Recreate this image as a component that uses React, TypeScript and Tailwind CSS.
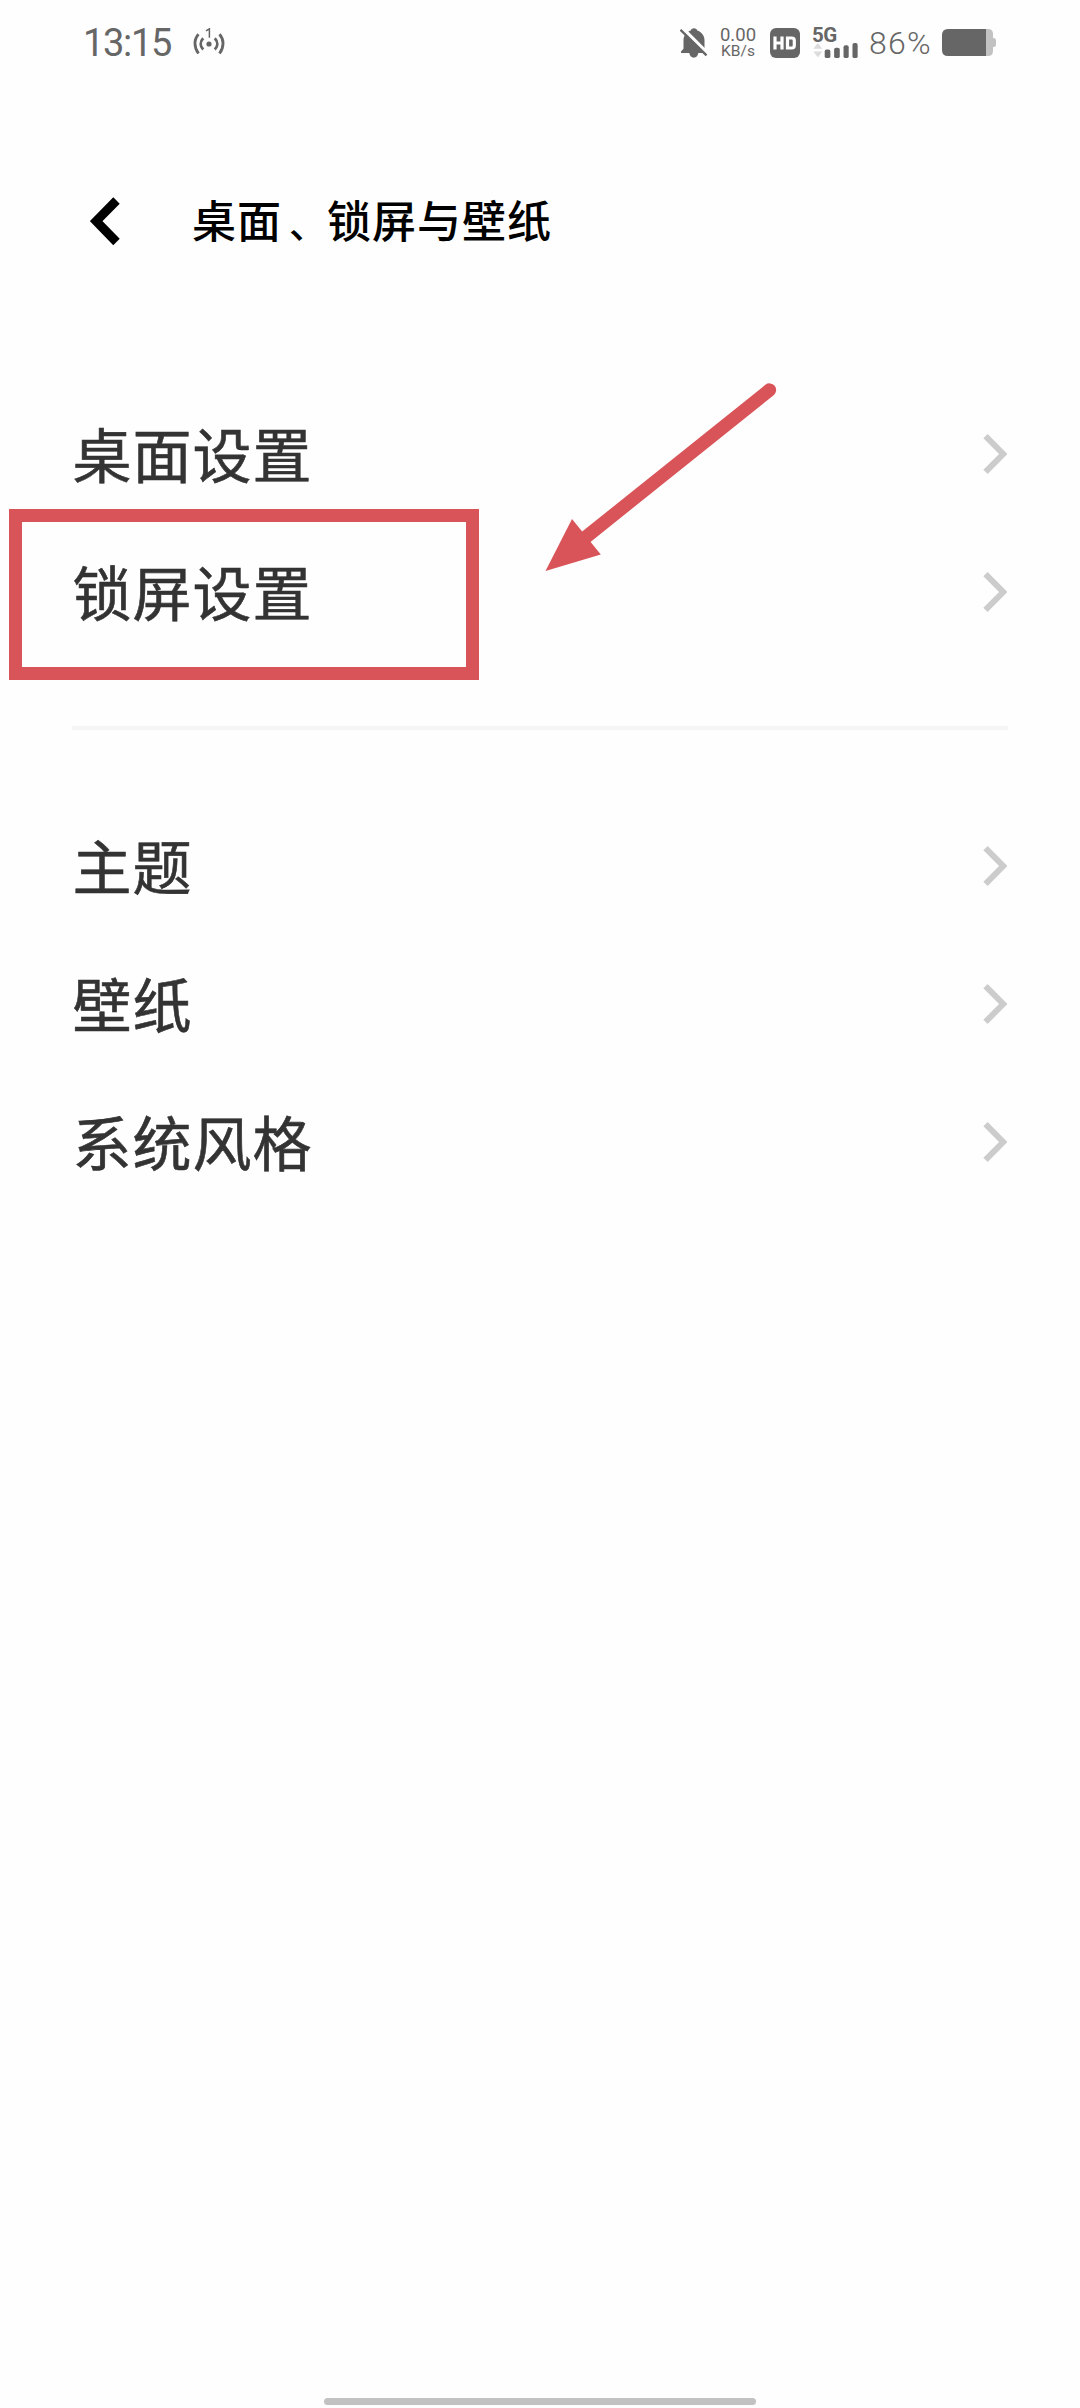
import React from "react";

function Antenna() {
  return (
    <svg className="h-[30px] w-[32px]" viewBox="0 0 32 30" fill="none" stroke="#666" strokeWidth="2.8">
      <path d="M5.5 6.3C.8 11.5.8 19 5.5 25.5M26.5 6.3c4.7 5.2 4.7 12.700 0 19.200" />
      <path d="M10.200 10.200c-3.300 3.500-3.300 8 0 11.400M21.800 10.200c3.300 3.500 3.300 8 0 11.400" />
      <circle cx="16" cy="16" r="2.6" fill="#666" stroke="none" />
      <path d="M13 2.800l3.400-2V9.800" strokeWidth="1.500" />
    </svg>
  );
}

function BellOff() {
  return (
    <svg className="h-[30px] w-[28px]" viewBox="0 0 28 30">
      <path
        d="M14 .2c1.700 0 3 1 3.200 2.200 4.300 1.300 7.300 5.200 7.300 9.800v8.500l2 4.300h-8.200c-.5 2.800-2.200 4.700-4.500 4.700s-4-1.900-4.500-4.700H1v-1.500l2.500-2.800v-8.500c0-4.600 3-8.500 7.300-9.800C11 1.200 12.300.2 14 .2z"
        fill="#666"
      />
      <path d="M2 -.3L29 26.700" stroke="#fefefe" strokeWidth="3.600" />
      <path d="M.5 1.800L26.500 27.300" stroke="#666" strokeWidth="2.400" />
    </svg>
  );
}

function HdBadge() {
  return (
    <svg className="h-[30px] w-[30px]" viewBox="0 0 30 30">
      <rect width="30" height="30" rx="6" fill="#666" />
      <path d="M5 8.500v13M12 8.500v13M5 15h7M17.500 10h4.300q2.500 0 2.500 2.500v5q0 2.500-2.500 2.500h-4.300z" fill="none" stroke="#fefefe" strokeWidth="3.200" />
    </svg>
  );
}

function Signal() {
  return (
    <svg className="h-[17px] w-[48px]" viewBox="0 0 48 17">
      <path d="M4.700 0L9.500 6H0zM0 9h9.500L4.700 15.500z" fill="#dcdcdc" />
      <g fill="#666">
        <rect x="12" y="7" width="6" height="9" rx="2" />
        <rect x="22" y="5" width="6" height="11" rx="2" />
        <rect x="32" y="2.500" width="5.500" height="13.500" rx="2" />
        <rect x="41.500" y="0" width="5.500" height="16" rx="2" />
      </g>
    </svg>
  );
}

function Battery() {
  return (
    <svg className="h-[27px] w-[54px]" viewBox="0 0 54 27">
      <path d="M44 0h2q5 0 5 5v4h.5q2.500 0 2.500 2.500v4q0 2.500-2.500 2.500H51v4q0 5-5 5h-2z" fill="#c2c2c2" />
      <path d="M6 0h38v27H6q-6 0-6-6V6q0-6 6-6z" fill="#666" />
    </svg>
  );
}

function StatusBar() {
  return (
    <header className="flex h-[85px] items-center pr-[84px] pl-[83px] font-[Roboto,sans-serif] text-[#666]">
      <span className="w-[110px] pt-px text-[38px] leading-[84px] tracking-[-1.3px] whitespace-nowrap">13:15</span>
      <Antenna />
      <div className="ml-auto flex items-center">
        <BellOff />
        <div className="ml-[11px] flex w-[38px] flex-col items-center whitespace-nowrap">
          <span className="text-[18.5px] leading-[17px]">0.00</span>
          <span className="text-[15.500px] leading-[15px]">KB/s</span>
        </div>
        <div className="ml-[13px]">
          <HdBadge />
        </div>
        <div className="ml-[12px] flex h-[32px] w-[48px] flex-col">
          <span className="text-[20.500px] leading-[16px] font-bold tracking-[-0.5px]">5G</span>
          <Signal />
        </div>
        <span className="ml-[9px] w-[73px] pt-px text-[32px] leading-[84px] font-light tracking-[1.3px] whitespace-nowrap">86%</span>
        <Battery />
      </div>
    </header>
  );
}

function Row({ label, highlighted = false }: { label: string; highlighted?: boolean }) {
  return (
    <li className="relative flex h-[138px] items-center justify-between">
      <span className="pb-[3px] pl-[0.5px] text-[59px] leading-[60px] tracking-[1px] text-[#333] [-webkit-text-stroke:0.6px_#333]">
        {label}
      </span>
      <svg className="h-[42px] w-[26px]" viewBox="0 0 26 42" fill="none" stroke="#ccc" strokeWidth="6">
        <path d="M3.500 3.200L21.200 21L3.500 38.800" />
      </svg>
      {highlighted && (
        <div className="absolute -top-[14px] -left-[63px] h-[171px] w-[470px] border-[13px] border-[#d95459]" />
      )}
    </li>
  );
}

export default function App() {
  return (
    <div className="relative flex h-[2408px] w-[1080px] flex-col bg-[#fefefe] font-['Noto_Sans_CJK_SC',sans-serif]">
      <StatusBar />
      <div className="mt-[81px] flex h-[110px] items-center pl-[90px]">
        <svg className="h-[50px] w-[32px]" viewBox="0 0 32 50" fill="none" stroke="#000" strokeWidth="9">
          <path d="M26.500 4.500L6.200 25.200L26.500 46" />
        </svg>
        <h1 className="ml-[70px] flex items-baseline pb-[2px] text-[44px] leading-[60px] font-medium tracking-[1px] text-black">
          <span>桌面</span>
          <span className="ml-[7px] text-[38px] tracking-normal">、</span>
          <span>锁屏与壁纸</span>
        </h1>
      </div>
      <main className="px-[72px] pt-[109px]">
        <ul>
          <Row label="桌面设置" />
          <Row label="锁屏设置" highlighted />
        </ul>
        <div className="mt-[65px] h-[4px] bg-[#f5f5f5]" />
        <ul className="mt-[67px]">
          <Row label="主题" />
          <Row label="壁纸" />
          <Row label="系统风格" />
        </ul>
      </main>
      <div className="mx-auto mt-auto mb-[3px] h-[7px] w-[432px] rounded-full bg-[#c2c2c2]" />
      <svg className="absolute top-[370px] left-[520px] h-[220px] w-[280px]" viewBox="0 0 280 220">
        <path d="M249.500 20L66 167" stroke="#d95459" strokeWidth="13.300" strokeLinecap="round" />
        <path d="M25.500 201L52 149L80.800 184.500z" fill="#d95459" />
      </svg>
    </div>
  );
}
